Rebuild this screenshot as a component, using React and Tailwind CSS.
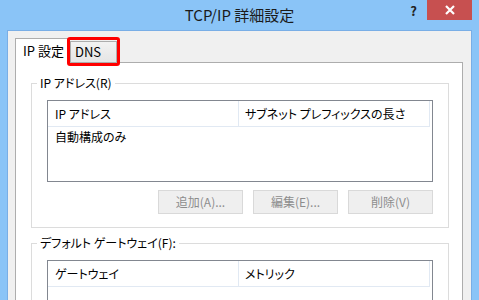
import React from "react";

const Group = ({ label, children, className = "" }) => (
  <div className={`relative border border-[#dcdcdc] px-[15px] pt-[16px] pb-[13px] ${className}`}>
    <span className="absolute left-[5px] -top-[9px] bg-white px-[3px] leading-[16px]">{label}</span>
    {children}
  </div>
);

const ListHeader = ({ cols }) => (
  <div className="flex h-[26px]">
    {cols.map((c, i) => (
      <div
        key={c}
        className={`w-[191px] flex items-center border-b border-r border-[#e1e9f3] ${i === 0 ? "pl-[7px]" : "pl-[6px]"}`}
      >
        {c}
      </div>
    ))}
  </div>
);

const DisabledButton = ({ children }) => (
  <button className="w-[85px] h-[24px] border border-[#d9d9d9] bg-[#efefef] text-[#8d8d8d] leading-[22px]">
    {children}
  </button>
);

export default function App() {
  return (
    <div className="w-[479px] h-[300px] overflow-hidden bg-[#8ac4f7] font-['Noto_Sans_CJK_JP',sans-serif] [font-feature-settings:'palt'] text-[12px] text-black">
      {/* title bar */}
      <div className="h-[30px] grid grid-cols-[1fr_auto_1fr]">
        <div />
        <div className="pt-[4px] text-[15px] leading-[22px] text-[#1b1b1b]">TCP/IP 詳細設定</div>
        <div className="flex justify-end items-start pr-[7px]">
          <span className="mt-[3px] mr-[10px] text-[13px] font-bold leading-[16px] text-[#222]">?</span>
          <button className="w-[45px] h-[20px] bg-[#c75050] flex items-center justify-center">
            <svg width="10" height="10" viewBox="0 0 10 10">
              <path d="M1 1 L9 9 M9 1 L1 9" stroke="#fff" strokeWidth="2.2" />
            </svg>
          </button>
        </div>
      </div>

      {/* client area */}
      <div className="mx-[7px] h-[300px] border border-[#79aee6] bg-[#f0f0f0] pt-[7px] pl-[7px] pr-[8px]">
        {/* tabs */}
        <div className="flex items-end">
          <div className="relative z-10 -mb-px h-[25px] w-[53px] border border-b-0 border-[#adadad] bg-white pl-[7px] pt-[3px] text-[13px] leading-[18px]">
            IP 設定
          </div>
          <div className="relative ml-[2px] h-[21px] w-[47px] border border-b-0 border-[#adadad] bg-gradient-to-b from-[#f2f2f2] to-[#e5e5e5] pl-[4px] pt-[1px] text-[13px] leading-[18px]">
            DNS
            <span className="absolute z-20 -left-[4px] -top-[5px] -right-[4px] -bottom-[4px] border-[3px] border-[#ff0000] rounded-[3px]" />
          </div>
        </div>

        {/* panel */}
        <div className="h-[300px] border border-[#adadad] bg-white pl-[15px] pr-[13px] pt-[20px]">
          <Group label="IP アドレス(R)">
            <div className="h-[82px] border border-[#828790]">
              <ListHeader cols={["IP アドレス", "サブネット プレフィックスの長さ"]} />
              <div className="pl-[7px] h-[19px] leading-[19px]">自動構成のみ</div>
            </div>
            <div className="mt-[8px] flex justify-end gap-[10px]">
              <DisabledButton>追加(A)...</DisabledButton>
              <DisabledButton>編集(E)...</DisabledButton>
              <DisabledButton>削除(V)</DisabledButton>
            </div>
          </Group>

          <Group label="デフォルト ゲートウェイ(F):" className="mt-[15px]">
            <div className="h-[82px] border border-[#828790]">
              <ListHeader cols={["ゲートウェイ", "メトリック"]} />
            </div>
          </Group>
        </div>
      </div>
    </div>
  );
}
